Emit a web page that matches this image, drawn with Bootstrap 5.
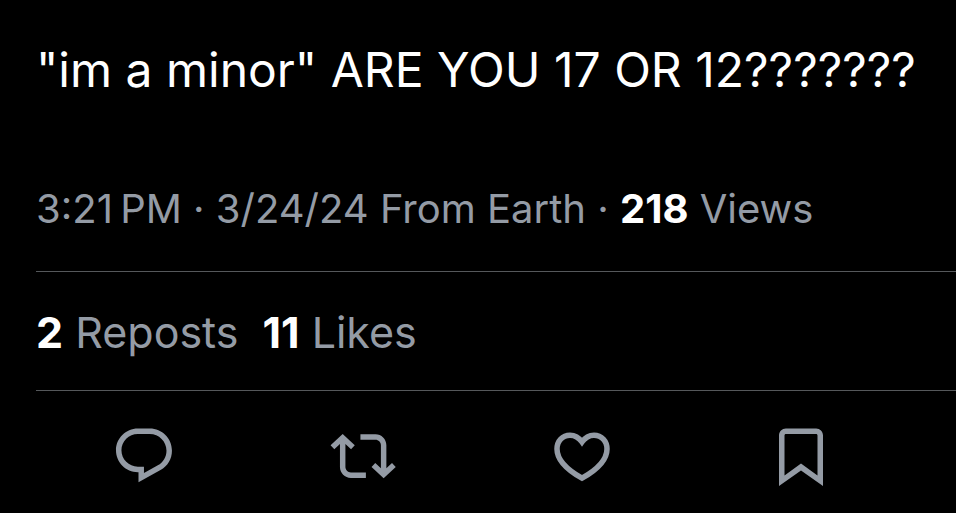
<!DOCTYPE html>
<html lang="en" data-bs-theme="dark">
<head>
<meta charset="utf-8">
<meta name="viewport" content="width=device-width, initial-scale=1">
<title>Post</title>
<link href="https://cdn.jsdelivr.net/npm/bootstrap@5.3.0/dist/css/bootstrap.min.css" rel="stylesheet">
<style>
  body { background: #000; color: #fff; font-family: Inter, Roboto, sans-serif; }
  .post { padding: 40px 0 0 36px; }
  .post-text { font-size: 48px; line-height: 60px; }
  .post-meta, .post-stats { color: #949ba5; line-height: 56px; }
  .post-meta { font-size: 40px; padding: 81px 0 34px; }
  .post-stats { font-size: 43px; padding: 32px 0 30px; column-gap: 24px; border-top: 1px solid #55585b; border-bottom: 1px solid #55585b; }
  .post b { color: #fff; font-weight: 700; }
  .post-stats a { color: inherit; }
  .post-actions { padding: 33px 46px 24px 34px; }
  .post-actions button { color: #949ba5; }
</style>
</head>
<body>
<main>
  <article class="post">
    <p class="post-text m-0">"im a minor" ARE YOU 17 OR 12???????</p>
    <div class="post-meta"><time datetime="2024-03-24T15:21">3:21&#8239;PM · 3/24/24</time> From Earth · <b>218</b> Views</div>
    <div class="post-stats d-flex flex-wrap">
      <a href="#" class="text-decoration-none"><b>2</b> Reposts</a>
      <a href="#" class="text-decoration-none"><b>11</b> Likes</a>
    </div>
  </article>
  <div class="post-actions d-flex">
    <div class="flex-fill d-flex justify-content-center">
      <button type="button" class="btn border-0 p-0 d-flex" aria-label="Reply">
        <svg width="71" height="64" viewBox="0 0 71 64" fill="currentColor" aria-hidden="true"><path transform="translate(3.2 -1) scale(2.73)" d="M1.751 10c0-4.42 3.584-8 8.005-8h4.366c4.49 0 8.129 3.64 8.129 8.13 0 2.96-1.607 5.68-4.196 7.11l-8.054 4.46v-3.69h-.067c-4.49.1-8.183-3.51-8.183-8.01zm8.005-6c-3.317 0-6.005 2.69-6.005 6 0 3.37 2.77 6.08 6.138 6.01l.351-.01h1.761v2.3l5.087-2.81c1.951-1.08 3.163-3.13 3.163-5.36 0-3.39-2.744-6.13-6.129-6.13H9.756z"/></svg>
      </button>
    </div>
    <div class="flex-fill d-flex justify-content-center">
      <button type="button" class="btn border-0 p-0 d-flex" aria-label="Repost">
        <svg width="71" height="64" viewBox="0 0 71 64" fill="currentColor" aria-hidden="true"><path transform="translate(3.4 -.6) scale(2.73)" d="M4.5 3.88l4.432 4.14-1.364 1.46L5.5 7.55V16c0 1.1.896 2 2 2H13v2H7.5c-2.209 0-4-1.79-4-4V7.55L1.432 9.48.068 8.02 4.5 3.88zM16.5 6H11V4h5.5c2.209 0 4 1.79 4 4v8.45l2.068-1.93 1.364 1.46-4.432 4.14-4.432-4.14 1.364-1.46 2.068 1.93V8c0-1.1-.896-2-2-2z"/></svg>
      </button>
    </div>
    <div class="flex-fill d-flex justify-content-center">
      <button type="button" class="btn border-0 p-0 d-flex" aria-label="Like">
        <svg width="71" height="64" viewBox="0 0 71 64" fill="none" stroke="currentColor" stroke-width="5.5" aria-hidden="true"><path d="M36 18C32.5 13 28 11.2 24 11.2C16.500 11.2 11 17 11 25C11 36 20.500 45.500 36 54.2C51.500 45.500 61 36 61 25C61 17 55.500 11.2 48 11.2C44 11.2 39.500 13 36 18Z"/></svg>
      </button>
    </div>
    <div class="flex-fill d-flex justify-content-center">
      <button type="button" class="btn border-0 p-0 d-flex" aria-label="Bookmark">
        <svg width="71" height="64" viewBox="0 0 71 64" fill="currentColor" aria-hidden="true"><path transform="translate(3 -1) scale(2.75)" d="M4 4.500C4 3.120 5.119 2 6.500 2h11C18.881 2 20 3.120 20 4.500v18.440l-8-5.710-8 5.710V4.500zM6.500 4c-.276 0-.5.22-.5.5v14.560l6-4.290 6 4.290V4.500c0-.28-.224-.5-.5-.5h-11z"/></svg>
      </button>
    </div>
  </div>
</main>
<script src="https://cdn.jsdelivr.net/npm/bootstrap@5.3.0/dist/js/bootstrap.bundle.min.js"></script>
</body>
</html>
